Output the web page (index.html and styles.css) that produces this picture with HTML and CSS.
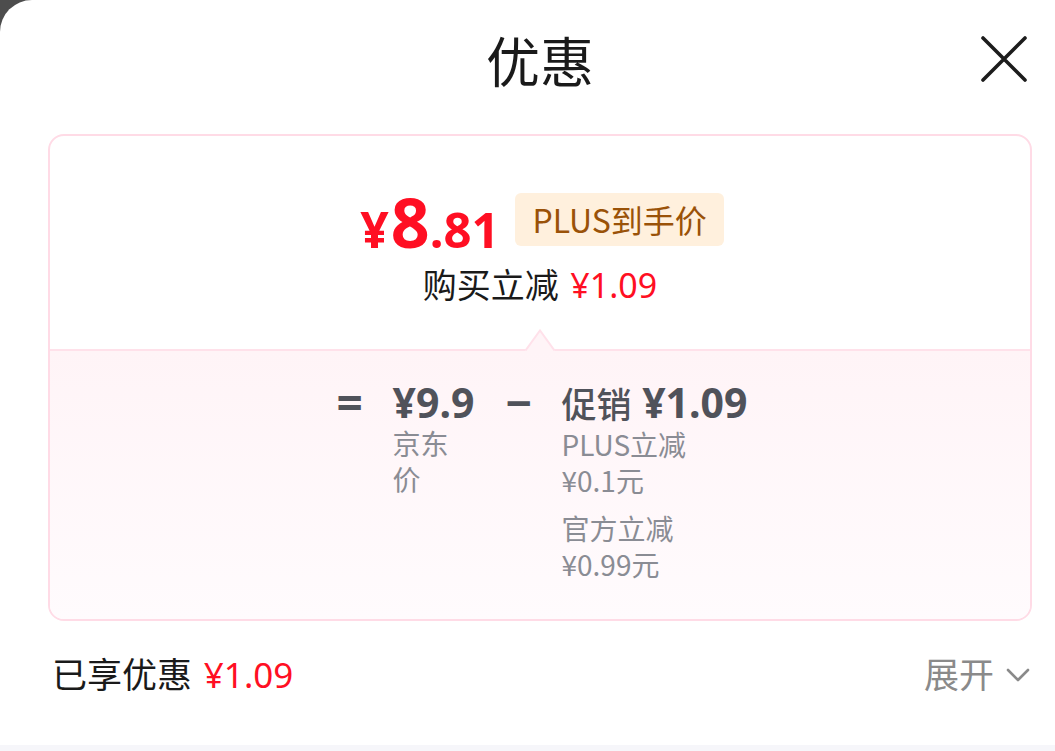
FILE: index.html
```html
<!DOCTYPE html>
<html lang="zh-CN">

<head>
    <meta charset="UTF-8">
    <meta name="viewport" content="width=device-width, initial-scale=1.0">
    <title>优惠</title>
    <link rel="stylesheet" href="styles.css">
</head>

<body>
    <div class="sheet">
        <div class="header">
            <div class="title">优惠</div>
            <span class="close">
                <svg width="48" height="48" viewBox="0 0 48 48">
                    <path d="M3 3 L45 45 M45 3 L3 45" stroke="#1c1c1c" stroke-width="3.6" stroke-linecap="round" fill="none" />
                </svg>
            </span>
        </div>

        <div class="card">
            <div class="card-top">
                <div class="final-row">
                    <span class="final-price"><span class="yen">¥</span><span class="int">8</span><span class="dec">.81</span></span>
                    <span class="badge">PLUS到手价</span>
                </div>
                <div class="save-row">购买立减 <span class="red">¥1.09</span></div>
            </div>

            <div class="card-bottom">
                <svg class="notch" width="30" height="22" viewBox="0 0 30 22">
                    <path d="M0 22 L15 1 L30 22 Z" fill="#fff4f7" />
                    <path d="M0.5 21.5 L15 1.5 L29.5 21.5" stroke="#ffe1ea" stroke-width="2" fill="none" />
                </svg>
                <div class="formula">
                    <span class="op">=</span>
                    <div class="col col-base">
                        <div class="amount">¥9.9</div>
                        <div class="sub">京东价</div>
                    </div>
                    <span class="op">−</span>
                    <div class="col">
                        <div class="amount"><span class="cn">促销</span> ¥1.09</div>
                        <div class="sub">PLUS立减<br>¥0.1元</div>
                        <div class="sub">官方立减<br>¥0.99元</div>
                    </div>
                </div>
            </div>
        </div>

        <div class="footer">
            <div class="enjoyed">已享优惠 <span class="red">¥1.09</span></div>
            <div class="expand">展开
                <svg width="24" height="16" viewBox="0 0 24 16">
                    <path d="M2 3 L12 13 L22 3" stroke="#8a8a8a" stroke-width="2.6" stroke-linecap="round" stroke-linejoin="round" fill="none" />
                </svg>
            </div>
        </div>
        <div class="bottom-band"></div>
    </div>
</body>

</html>
```

FILE: styles.css
```css
body {
    margin: 0;
    padding: 0;
    background-color: #4d4d4d;
    font-family: "Noto Sans CJK SC", "Noto Sans", sans-serif;
    overflow: hidden;
}

.sheet {
    background-color: #fff;
    border-top-left-radius: 32px;
    height: 751px;
    display: flex;
    flex-direction: column;
}

.header {
    height: 124px;
    display: flex;
    align-items: center;
    justify-content: center;
    padding-left: 25px;
    position: relative;
}

.title {
    font-size: 54px;
    color: #1a1a1a;
    line-height: 1;
    margin-top: -4px;
}

.close {
    position: absolute;
    right: 27px;
    top: 35px;
    display: flex;
}

.card {
    margin: 10px 23px 0 48px;
    border: 2px solid #ffdbe6;
    border-radius: 16px;
    overflow: hidden;
}

.card-top {
    height: 213px;
    display: flex;
    flex-direction: column;
    align-items: center;
    padding-top: 56px;
    box-sizing: border-box;
}

.final-row {
    display: flex;
    align-items: center;
    gap: 16px;
    height: 54px;
    margin-left: 4px;
}

.final-price {
    color: #ff0f23;
    font-family: "Noto Sans", sans-serif;
    font-weight: 700;
    line-height: 1;
    display: flex;
    align-items: baseline;
    margin-top: 6px;
}

.final-price .yen {
    font-size: 50px;
}

.final-price .int {
    font-size: 68px;
    margin-left: 2px;
}

.final-price .dec {
    font-size: 49px;
}

.badge {
    background-color: #fff0dd;
    color: #9a5208;
    font-size: 32px;
    line-height: 53px;
    padding: 0 17px;
    border-radius: 6px;
}

.save-row {
    margin-top: 16px;
    font-size: 34px;
    line-height: 44px;
    color: #1a1a1a;
}

.red {
    color: #ff0f23;
    font-family: "Noto Sans", sans-serif;
    margin-left: 4px;
}

.card-bottom {
    position: relative;
    border-top: 2px solid #ffe1ea;
    background: linear-gradient(to bottom, #fff4f7, #fffbfd);
    padding: 28px 0 37px;
}

.notch {
    position: absolute;
    top: -22px;
    left: 50%;
    margin-left: -15px;
}

.formula {
    display: flex;
    justify-content: center;
    align-items: flex-start;
    gap: 31px;
    margin-left: 4px;
}

.op {
    width: 25px;
    text-align: center;
    font-family: "Noto Sans", sans-serif;
    font-size: 46px;
    font-weight: 700;
    color: #50525a;
    line-height: 46px;
}

.col {
    display: flex;
    flex-direction: column;
    gap: 12px;
}

.col-base {
    width: 82px;
}

.amount {
    font-family: "Noto Sans", sans-serif;
    font-weight: 700;
    font-size: 41px;
    line-height: 46px;
    color: #50525a;
    white-space: nowrap;
}

.amount .cn {
    font-family: "Noto Sans CJK SC", sans-serif;
    font-size: 35px;
    font-weight: 500;
}

.sub {
    font-size: 28px;
    line-height: 36px;
    color: #8a8c94;
}

.col-base .sub {
    width: 60px;
}

.col .amount + .sub {
    margin-top: -12px;
}

.footer {
    height: 102px;
    display: flex;
    align-items: center;
    justify-content: space-between;
    padding: 0 25px 0 52px;
}

.enjoyed {
    font-size: 35px;
    color: #1a1a1a;
}

.expand {
    font-size: 35px;
    color: #8a8a8a;
    display: flex;
    align-items: center;
    gap: 12px;
}

.expand svg {
    margin-top: 6px;
}

.bottom-band {
    margin-top: auto;
    height: 6px;
    background-color: #f6f6fa;
}
```
